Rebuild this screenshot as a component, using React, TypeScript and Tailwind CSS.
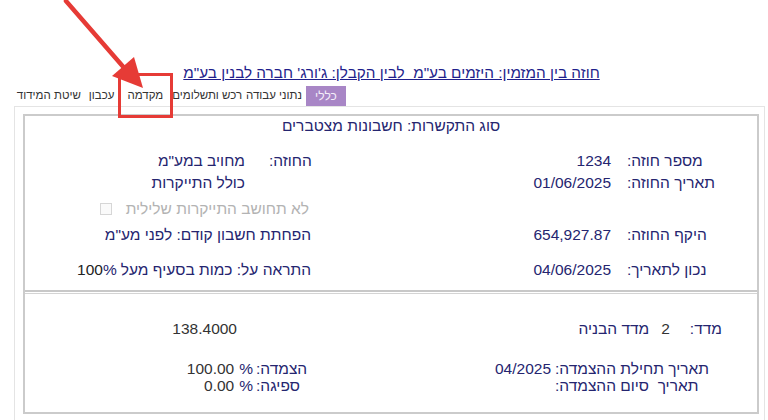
import React from "react";

const font = { fontFamily: '"Liberation Sans", Arial, sans-serif' };

export default function App() {
  return (
    <div
      dir="rtl"
      className="relative w-[768px] h-[420px] bg-white overflow-hidden text-[15.5px] text-[#25256f] whitespace-nowrap"
      style={font}
    >
      {/* title */}
      <div className="pt-[64px] h-[82px] flex justify-center pl-[15px]">
        <span className="underline leading-[18px] text-[15.3px] text-[#1f1f8c]">
          חוזה בין המזמין: היזמים בע"מ&nbsp; לבין הקבלן: ג'ורג' חברה לבנין בע"מ
        </span>
      </div>

      {/* tabs */}
      <div className="mt-[4px] flex pr-[422px] text-[11.5px] text-[#333333]">
        <div className="h-[20px] w-[40px] flex items-center justify-center bg-[#a886c6] text-[#f4eefa] text-[12px]">
          כללי
        </div>
        <div className="h-[20px] mr-[4px] flex items-center">נתוני עבודה</div>
        <div className="h-[20px] mr-[4px] flex items-center">רכש ותשלומים</div>
        <div className="h-[20px] mr-[9px] flex items-center">מקדמה</div>
        <div className="h-[20px] mr-[13px] flex items-center">עכבון</div>
        <div className="h-[20px] mr-[8px] flex items-center">שיטת המידוד</div>
      </div>

      {/* outer panel */}
      <div className="mr-[3px] ml-[14px] border border-[#e4e4e4] pt-[7px] pr-[5px] pl-[8px] pb-[6px]">
        <div className="border-2 border-[#cbcbcb]">
          {/* section 1 */}
          <div className="border-b-2 border-[#c8c8c8] pb-[10px]">
            <div className="h-[20px] flex items-center justify-center">
              סוג התקשרות: חשבונות מצטברים
            </div>

            <div className="mt-[15px] h-[20px] flex items-center">
              <div className="w-[378px] pr-[46px] flex">
                <span className="w-[84px] flex justify-end">מספר חוזה:</span>
                <span className="mr-[16px]">1234</span>
              </div>
              <div className="flex-1 pr-[68px] flex">
                <span className="w-[42px] flex justify-end">החוזה:</span>
                <span className="mr-[24px]">מחויב במע"מ</span>
              </div>
            </div>

            <div className="mt-[2px] h-[20px] flex items-center">
              <div className="w-[378px] pr-[46px] flex">
                <span className="w-[84px] flex justify-end">תאריך החוזה:</span>
                <span className="mr-[16px]">01/06/2025</span>
              </div>
              <div className="flex-1 pr-[134px] flex">
                <span>כולל התייקרות</span>
              </div>
            </div>

            <div className="mt-[6px] h-[20px] flex items-center">
              <div className="w-[378px]" />
              <div className="flex-1 pr-[70px] flex items-center text-[#b3b3b3]">
                <span>לא תחושב התייקרות שלילית</span>
                <span className="mr-[14px] w-[12px] h-[12px] border border-[#d6d6d6] bg-[#fafafa]" />
              </div>
            </div>

            <div className="mt-[6px] h-[20px] flex items-center">
              <div className="w-[378px] pr-[46px] flex">
                <span className="w-[84px] flex justify-end">היקף החוזה:</span>
                <span className="mr-[16px]">654,927.87</span>
              </div>
              <div className="flex-1 pr-[68px] flex">
                <span>הפחתת חשבון קודם: לפני מע"מ</span>
              </div>
            </div>

            <div className="mt-[15px] h-[20px] flex items-center">
              <div className="w-[378px] pr-[46px] flex">
                <span className="w-[84px] flex justify-end">נכון לתאריך:</span>
                <span className="mr-[16px]">04/06/2025</span>
              </div>
              <div className="flex-1 pr-[68px] flex">
                <span>התראה על: כמות בסעיף מעל</span>
                <span className="mr-[4px]">%</span>
                <span className="text-[#222222]">100</span>
              </div>
            </div>
          </div>

          {/* section 2 */}
          <div className="mt-[1px] border-t border-[#d4d4d4] pb-[18px]">
            <div className="mt-[25px] h-[20px] flex items-center">
              <div className="w-[378px] pr-[35px] flex">
                <span>מדד:</span>
                <span className="mr-[20px] text-[#333333]">2</span>
                <span className="mr-[12px]">מדד הבניה</span>
              </div>
              <div className="flex-1 pr-[142px] flex text-[#333333]">
                <span>138.4000</span>
              </div>
            </div>

            <div className="mt-[21px] h-[17px] flex items-center">
              <div className="w-[378px] pr-[50px] flex">
                <span className="w-[152px] flex justify-end">תאריך תחילת ההצמדה:</span>
                <span className="mr-[4px]">04/2025</span>
              </div>
              <div className="flex-1 pr-[68px] flex">
                <span className="w-[55px] flex justify-end">הצמדה:</span>
                <span className="mr-[3px]">%</span>
                <span className="mr-[5px] text-[#333333]">100.00</span>
              </div>
            </div>

            <div className="h-[17px] flex items-center">
              <div className="w-[378px] pr-[50px] flex">
                <span className="w-[152px] flex justify-end whitespace-pre">תאריך  סיום ההצמדה:</span>
              </div>
              <div className="flex-1 pr-[68px] flex">
                <span className="w-[55px] flex justify-end">ספיגה:</span>
                <span className="mr-[3px]">%</span>
                <span className="mr-[5px] text-[#333333]">0.00</span>
              </div>
            </div>
          </div>
        </div>
      </div>

      {/* annotation: arrow + highlight box */}
      <svg
        className="absolute left-0 top-0 pointer-events-none"
        width={768}
        height={420}
        viewBox="0 0 768 420"
      >
        <line x1="66" y1="1" x2="126" y2="70" stroke="#e63b36" strokeWidth="4.5" strokeLinecap="round" />
        <polygon points="143,88 112,76 134,57" fill="#e63b36" />
        <rect x="119.5" y="74.5" width="52" height="42" fill="none" stroke="#e63b36" strokeWidth="3" />
      </svg>
    </div>
  );
}
